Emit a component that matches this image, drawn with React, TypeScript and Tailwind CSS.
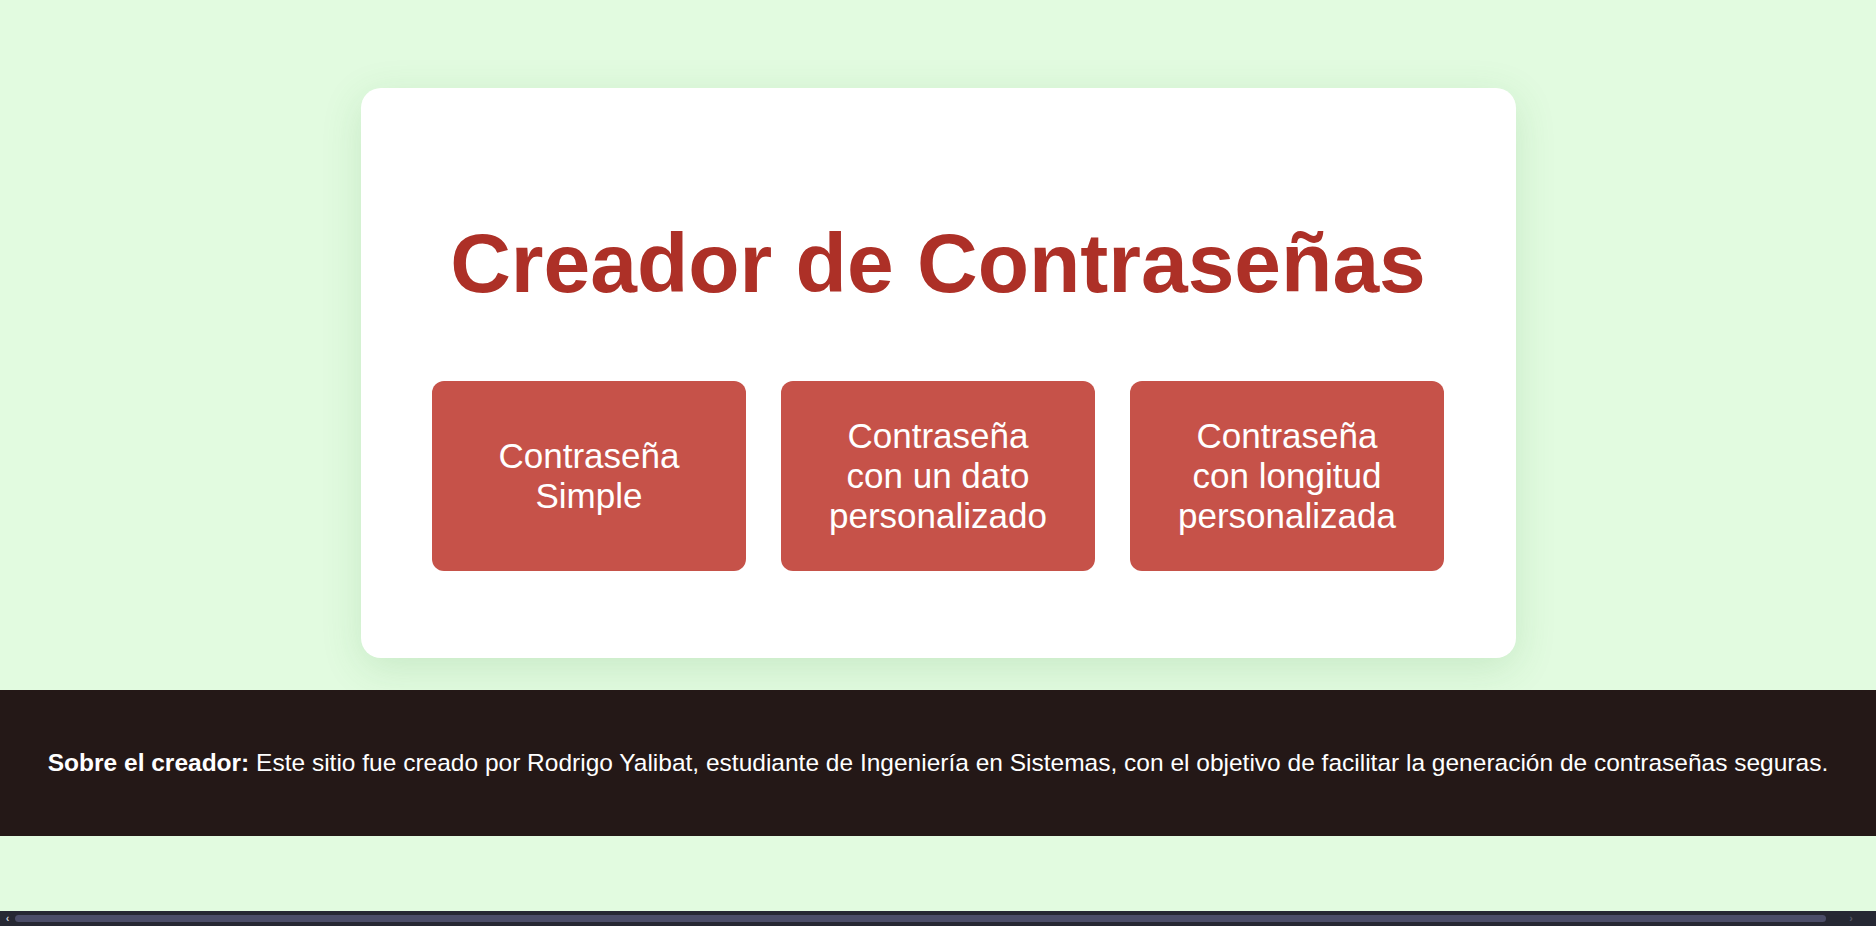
import React from 'react';

const options = [
  'Contraseña Simple',
  'Contraseña con un dato personalizado',
  'Contraseña con longitud personalizada',
];

const App: React.FC = () => {
  return (
    <div
      className="flex h-[926px] w-full flex-col overflow-hidden bg-[#e2fbe0]"
      style={{ fontFamily: '"Liberation Sans", Arial, sans-serif' }}
    >
      {/* Main card */}
      <main className="mx-auto mt-[88px] flex h-[570px] w-[1155px] shrink-0 flex-col items-center rounded-[20px] bg-white pt-[127px] shadow-[0_10px_40px_rgba(60,140,60,0.16)]">
        <h1 className="text-[84px] leading-[96px] font-bold text-[#ad3027]">Creador de Contraseñas</h1>

        <div className="mt-[70px] flex gap-[35px]">
          {options.map((label) => (
            <button
              key={label}
              className="flex h-[190px] w-[314px] items-center justify-center rounded-[12px] bg-[#c65249] px-10 text-center text-[35px] leading-[40px] text-white"
            >
              {label}
            </button>
          ))}
        </div>
      </main>

      {/* Footer */}
      <footer className="mt-[32px] flex h-[146px] shrink-0 items-center justify-center whitespace-nowrap bg-[#241817] text-[24.5px] text-white">
        <p>
          <span className="font-bold">Sobre el creador:</span> Este sitio fue creado por Rodrigo Yalibat, estudiante de
          Ingeniería en Sistemas, con el objetivo de facilitar la generación de contraseñas seguras.
        </p>
      </footer>

      <div className="flex-1" />

      {/* Horizontal scrollbar */}
      <div className="flex h-[15px] shrink-0 items-center bg-[#262833]">
        <span className="flex w-[15px] justify-center text-[11px] leading-none font-bold text-[#c9cad3]">‹</span>
        <div className="h-[7px] w-[1811px] rounded-full bg-[#4b4d68]" />
        <span className="flex w-[15px] flex-1 justify-center text-[11px] leading-none font-bold text-[#555766]">›</span>
      </div>
    </div>
  );
};

export default App;
